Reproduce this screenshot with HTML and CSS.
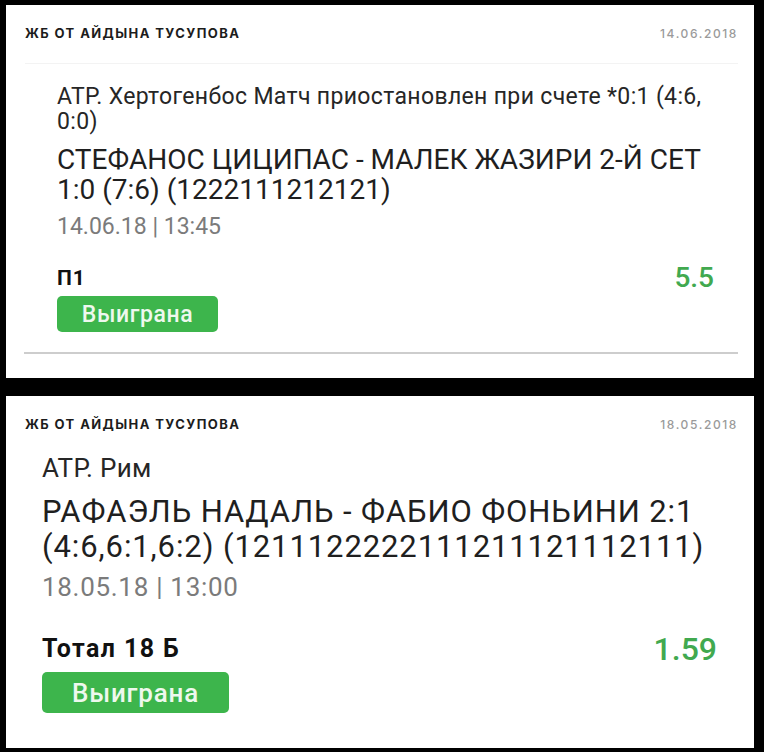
FILE: index.html
```html
<!DOCTYPE html>
<html>
<head>
<meta charset="utf-8">
<title>ЖБ от Айдына Тусупова</title>
<link rel="stylesheet" href="styles.css">
</head>
<body>

<div class="feed">

<div class="post post-one">
    <div class="post-head">
        <span class="author">ЖБ от Айдына Тусупова</span>
        <span class="posted">14.06.2018</span>
    </div>
    <div class="rule"></div>
    <div class="bet">
        <div class="event">ATP. Хертогенбос Матч приостановлен при счете *0:1 (4:6,<br>0:0)</div>
        <div class="match">СТЕФАНОС ЦИЦИПАС - МАЛЕК ЖАЗИРИ 2-Й СЕТ<br>1:0 (7:6) (1222111212121)</div>
        <div class="time">14.06.18 | 13:45</div>
        <div class="pick"><b>П1</b><span class="odds">5.5</span></div>
        <span class="status">Выиграна</span>
    </div>
    <div class="rule rule-bottom"></div>
</div>

<div class="post post-two">
    <div class="post-head">
        <span class="author">ЖБ от Айдына Тусупова</span>
        <span class="posted">18.05.2018</span>
    </div>
    <div class="bet">
        <div class="event">ATP. Рим</div>
        <div class="match">РАФАЭЛЬ НАДАЛЬ - ФАБИО ФОНЬИНИ 2:1<br>(4:6,6:1,6:2) (1211122222111211121112111)</div>
        <div class="time">18.05.18 | 13:00</div>
        <div class="pick"><b>Тотал 18 Б</b><span class="odds">1.59</span></div>
        <span class="status">Выиграна</span>
    </div>
</div>

</div>

</body>
</html>
```

FILE: styles.css
```css
html, body {margin:0; padding:0; background:#000;}
body {font:16px Roboto, "Noto Sans", sans-serif; color:#222;}
.feed {display:flex; flex-direction:column; gap:18px; padding:5px 10px 0 6px;}

/* post card */
.post {background:#fff; padding-top:20px;}
.post-head {display:flex; justify-content:space-between; align-items:center; height:16px; padding:0 16px 0 19px; font-family:Inter, "Open Sans", sans-serif;}
.author {font-size:13px; font-weight:700; letter-spacing:1.4px; text-transform:uppercase; color:#1c1c1c;}
.posted {font-size:12px; font-weight:500; letter-spacing:1.6px; color:#9a9a9a;}
.rule {height:1px; background:#f3f3f3; margin:22px 16px 0 19px;}
.rule-bottom {height:2px; background:#cdcdcd; margin:20px 16px 0 18px;}

/* bet body */
.bet {display:flex; flex-direction:column; align-items:flex-start;}
.event {color:#262626; white-space:nowrap;}
.match {color:#1f1f1f; white-space:nowrap;}
.time {color:#7b7b7b;}
.pick {display:flex; justify-content:space-between; align-items:center; align-self:stretch;}
.pick b {color:#111;}
.odds {color:#41a94f; font-weight:500;}
.status {display:flex; align-items:center; justify-content:center; background:#3db54c; color:#eef8ee; border-radius:5px; font-weight:500;}

/* first post, smaller scale */
.post-one {padding-bottom:24px;}
.post-one .bet {padding:0 40px 0 51px;}
.post-one .event {margin-top:20px; font-size:23px; line-height:25px; letter-spacing:0.35px;}
.post-one .match {margin-top:11px; font-size:28px; line-height:30px;}
.post-one .time {margin-top:9px; font-size:23px; line-height:26px;}
.post-one .pick {margin-top:22px; line-height:32px;}
.post-one .pick b {font-size:21px; letter-spacing:1px;}
.post-one .odds {font-size:28px;}
.post-one .status {margin-top:2px; width:161px; height:36px; font-size:23px; letter-spacing:0.6px;}

/* second post, larger scale */
.post-two {padding-bottom:35px;}
.post-two .bet {padding:0 37px 0 36px;}
.post-two .event {margin-top:22px; font-size:26px; line-height:28px; letter-spacing:0.3px;}
.post-two .match {margin-top:12px; font-size:31px; line-height:35px; letter-spacing:0.9px;}
.post-two .time {margin-top:9px; font-size:26px; line-height:28px; letter-spacing:0.7px;}
.post-two .pick {margin-top:31px; line-height:34px;}
.post-two .pick b {font-size:25px; letter-spacing:1.4px;}
.post-two .odds {font-size:32px;}
.post-two .status {margin-top:6px; width:187px; height:41px; font-size:26px; letter-spacing:0.8px;}
```
